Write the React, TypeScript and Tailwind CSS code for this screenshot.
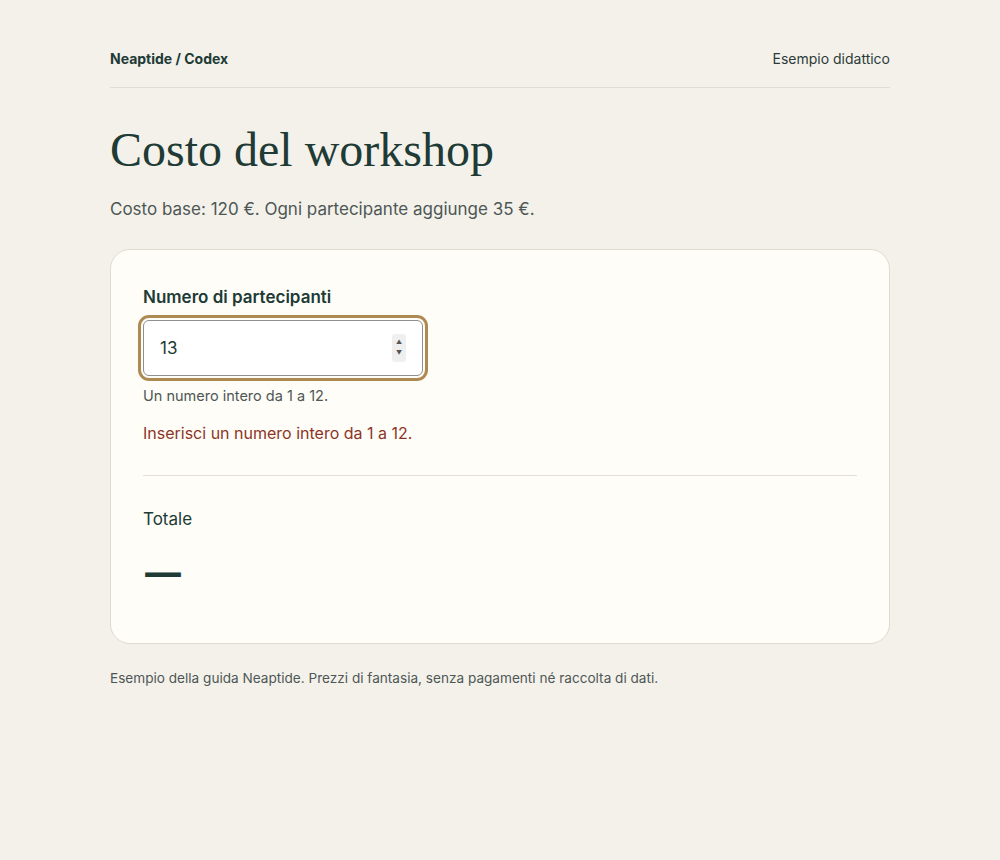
export default function App() {
  const count = "13";

  return (
    <div className="min-h-[860px] bg-[#f4f1eb] text-[#203a35] [font-family:Inter,'Liberation_Sans',sans-serif]">
      <div className="mx-auto w-[780px] pt-[48px]">
        <header className="flex items-center justify-between border-b border-[#e0ddd6] pb-[18px]">
          <span className="text-[14px] font-bold">Neaptide / Codex</span>
          <span className="text-[14px] text-[#2c3b38]">Esempio didattico</span>
        </header>

        <h1 className="mt-[36px] text-[48px] leading-[1.1] text-[#203a35] [font-family:'Liberation_Serif',serif]">
          Costo del workshop
        </h1>
        <p className="mt-[20px] text-[17px] text-[#4d5754]">
          Costo base: 120 €. Ogni partecipante aggiunge 35 €.
        </p>

        <section className="mt-[27px] rounded-[20px] border border-[#dedbd3] bg-[#fffdf8] px-[32px] pt-[35px] pb-[48px]">
          <label htmlFor="n" className="block text-[17px] font-semibold text-[#203a35]">
            Numero di partecipanti
          </label>
          <div className="relative mt-[9px] w-[280px]">
            <input
              id="n"
              type="number"
              min={1}
              max={12}
              defaultValue={count}
              className="block h-[56px] w-[280px] appearance-none rounded-[6px] border border-[#8f8f8f] bg-white px-[16px] text-[17px] text-[#203a35] outline-[3px] outline-offset-[2px] outline-[#ad8a52] outline-solid [&::-webkit-inner-spin-button]:appearance-none"
            />
            <div className="pointer-events-none absolute top-[14px] right-[17px] flex h-[28px] w-[14px] flex-col items-center justify-center gap-[5px] rounded-[3px] bg-[#efefef] text-[6px] leading-none text-[#555]">
              <span>▲</span>
              <span>▼</span>
            </div>
          </div>
          <p className="mt-[9px] text-[14.5px] text-[#4d5754]">Un numero intero da 1 a 12.</p>
          <p className="mt-[14px] text-[16px] text-[#8c3526]">Inserisci un numero intero da 1 a 12.</p>

          <div className="mt-[30px] border-t border-[#e3e0d9]" />

          <p className="mt-[31px] text-[17px] text-[#203a35]">Totale</p>
          <p className="mt-[15px] text-[40px] leading-[1.2] font-bold text-[#203a35] [font-family:'DejaVu_Serif',serif]">—</p>
        </section>

        <p className="mt-[24px] text-[13.6px] text-[#4d5754]">
          Esempio della guida Neaptide. Prezzi di fantasia, senza pagamenti né raccolta di dati.
        </p>
      </div>
    </div>
  );
}
